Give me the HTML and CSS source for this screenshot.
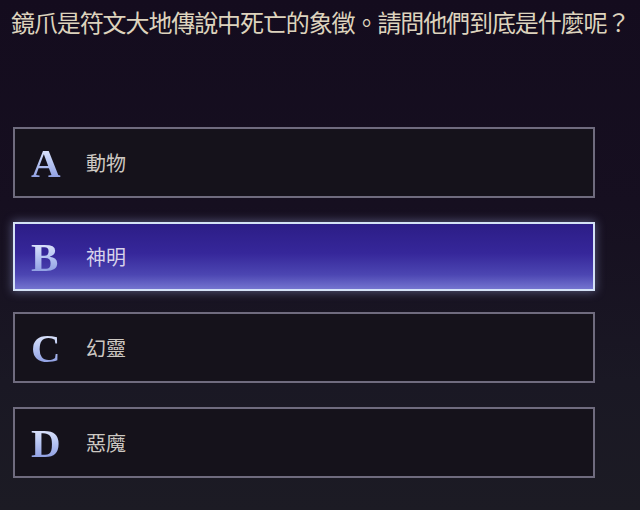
FILE: index.html
```html
<!DOCTYPE html>
<html lang="zh-Hant">
<head>
<meta charset="utf-8">
<link rel="stylesheet" href="styles.css">
</head>
<body>
<div class="screen">
  <h1 class="question">鏡爪是符文大地傳說中死亡的象徵。請問他們到底是什麼呢？</h1>
  <div class="options">
    <div class="option"><span class="letter">A</span><span class="label">動物</span></div>
    <div class="option selected"><span class="letter">B</span><span class="label">神明</span></div>
    <div class="option"><span class="letter">C</span><span class="label">幻靈</span></div>
    <div class="option"><span class="letter">D</span><span class="label">惡魔</span></div>
  </div>
</div>
</body>
</html>
```
FILE: styles.css
```css
html, body {
  margin: 0;
  padding: 0;
}
body {
  width: 640px;
  height: 510px;
  overflow: hidden;
  background: linear-gradient(180deg, #140c1e 0%, #160f20 40%, #1a1824 75%, #1c1b24 100%);
  font-family: "Noto Sans CJK TC", "Noto Sans CJK SC", sans-serif;
}
.screen {
  display: flex;
  flex-direction: column;
  padding: 6px 0 0 11px;
}
.question {
  margin: 0;
  font-size: 24px;
  font-weight: 400;
  line-height: 32px;
  letter-spacing: -1.1px;
  color: #ddd3bd;
  white-space: nowrap;
}
.options {
  display: flex;
  flex-direction: column;
  gap: 24px;
  margin-top: 89px;
  padding-left: 2px;
}
.option {
  box-sizing: border-box;
  width: 582px;
  height: 71px;
  display: flex;
  align-items: center;
  border: 2px solid #6f6b7e;
  background: #15121b;
  padding-left: 16px;
}
.option.selected {
  height: 69px;
  margin-bottom: -3px;
  border-color: #d4e2f6;
  background: linear-gradient(180deg, #2c1d86 0%, #36279a 45%, #4c46b2 78%, #7474cf 100%);
  box-shadow: 0 0 9px 1px rgba(170, 180, 240, 0.4);
}
.letter {
  width: 55px;
  font-family: "Liberation Serif", "DejaVu Serif", serif;
  font-weight: 700;
  font-size: 41px;
  line-height: 42px;
  background: linear-gradient(180deg, #f2f4ff 0%, #bccaf4 45%, #7f8fdc 100%);
  -webkit-background-clip: text;
  background-clip: text;
  color: transparent;
}
.label {
  font-size: 20px;
  line-height: 24px;
  color: #cdc8c2;
  letter-spacing: 0;
}
.selected .label {
  color: #d6d2ea;
}
```
